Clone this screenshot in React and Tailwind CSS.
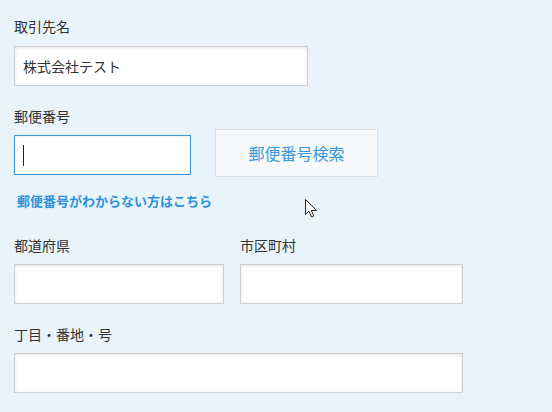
import React from "react";

const font = { fontFamily: '"Noto Sans CJK JP", "Noto Sans", sans-serif' };

function Label({ children, className = "" }) {
  return (
    <div className={`text-[14px] leading-5 text-[#333] ${className}`}>{children}</div>
  );
}

function Field({ className = "", children }) {
  return (
    <div
      className={`h-10 bg-white border border-[#cfcfcf] shadow-[inset_0_1px_3px_rgba(0,0,0,0.12)] flex items-center px-2 text-[14px] text-[#333] ${className}`}
    >
      {children}
    </div>
  );
}

export default function App() {
  return (
    <div
      className="relative w-[552px] h-[412px] bg-[#e8f3fa] px-[14px] pt-4 overflow-hidden"
      style={font}
    >
      <Label>取引先名</Label>
      <Field className="mt-[10px] w-[294px]">株式会社テスト</Field>

      <Label className="mt-5">郵便番号</Label>
      <div className="mt-[3px] flex items-start gap-6">
        <div className="mt-[6px] w-[177px] h-10 bg-white border border-[#3b97dc] shadow-[inset_0_1px_3px_rgba(0,0,0,0.08)] flex items-center pl-2">
          <div className="w-px h-[21px] bg-[#222]" />
        </div>
        <button className="w-[163px] h-12 bg-[#f6f8fa] border border-[#dfe3e7] text-[16px] text-[#3b97dc]">
          郵便番号検索
        </button>
      </div>

      <div className="mt-[15px] pl-[3px] text-[13px] leading-[18px] font-bold text-[#2f91d8]">
        郵便番号がわからない方はこちら
      </div>

      <div className="mt-[25px] flex gap-4">
        <div className="w-[210px]">
          <Label>都道府県</Label>
          <Field className="mt-[9px]" />
        </div>
        <div className="w-[223px]">
          <Label>市区町村</Label>
          <Field className="mt-[9px]" />
        </div>
      </div>

      <Label className="mt-5">丁目・番地・号</Label>
      <Field className="mt-[9px] w-[449px]" />

      <svg
        className="absolute left-[305px] top-[199px]"
        width="13"
        height="19"
        viewBox="0 0 13 19"
      >
        <path
          d="M0.5 0.5 L0.5 15.5 L4 12.2 L6.6 18 L8.8 17 L6.3 11.4 L11.5 11.4 Z"
          fill="#fff"
          stroke="#222"
          strokeWidth="1"
          strokeLinejoin="round"
        />
      </svg>
    </div>
  );
}
